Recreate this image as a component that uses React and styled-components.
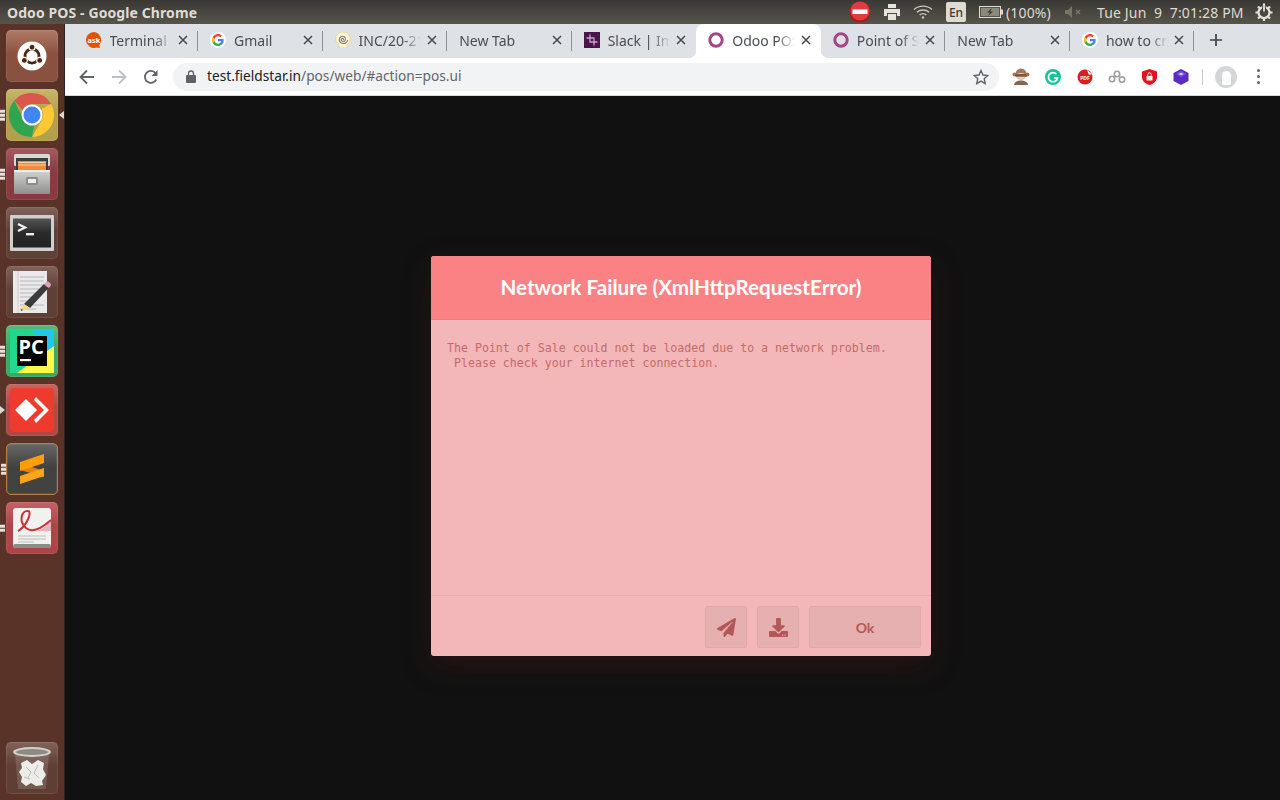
import React from "react";
import styled, { createGlobalStyle } from "styled-components";
import { FaPaperPlane, FaDownload } from "react-icons/fa";

const Global = createGlobalStyle`
  html, body { margin: 0; padding: 0; background: #111; overflow: hidden; }
  * { box-sizing: border-box; }
`;

const Screen = styled.div`
  width: 1280px; height: 800px; display: flex; flex-direction: column; overflow: hidden;
  font-family: "Noto Sans", sans-serif;
`;
const TopBar = styled.header`
  height: 24px; flex: none; display: flex; align-items: center; padding-right: 6px;
  background: linear-gradient(#3a3834, #57544a);
  color: #dfdbd2;
`;
const WindowTitle = styled.div`
  margin-left: 7px; flex: 1; font: 700 14px "Noto Sans", sans-serif; letter-spacing: .1px; white-space: nowrap;
`;
const Indicator = styled.div`
  width: ${p => p.$w}px; margin-left: ${p => p.$ml || 0}px; flex: none; height: 24px;
  display: flex; align-items: center; justify-content: center;
`;
const LangBox = styled.div`
  width: 20px; height: 20px; border-radius: 2px; background: #dfdbd2; color: #3c3b37;
  font: 500 12px "Noto Sans", sans-serif; display: flex; align-items: center; justify-content: center;
`;
const StatusText = styled.span`
  margin-left: ${p => p.$ml || 0}px; width: ${p => p.$w}px; flex: none; white-space: pre;
  font: 400 14px "Noto Sans", sans-serif; letter-spacing: .15px; color: #dfdbd2;
`;

const Body = styled.div`flex: 1; display: flex; min-height: 0;`;
const Launcher = styled.nav`
  width: 65px; flex: none; display: flex; flex-direction: column; align-items: flex-start;
  padding: 6px 0 6px 6px; gap: 7px; background: #5a3328; border-right: 1px solid #2c211d;
`;
const Spacer = styled.div`flex: 1;`;
const Tile = styled.div`
  position: relative; width: 52px; height: 52px; border-radius: 5px; flex: none;
  display: flex; align-items: center; justify-content: center;
  background: linear-gradient(${p => p.$light}, ${p => p.$tone} 45%);
  border: ${p => (p.$ring ? `1px solid ${p.$ring}` : "0")};
  box-shadow: inset 0 0 0 1px rgba(255,255,255,.08);
`;
const Pips = styled.div`
  position: absolute; left: -6px; top: 50%; transform: translateY(-50%);
  display: flex; flex-direction: column; gap: 1.5px;
`;
const Pip = styled.i`display: block; width: 4.5px; height: 2.5px; background: #e4e0da;`;
const Arrow = styled.i`
  position: absolute; top: 50%; transform: translateY(-50%);
  ${p => p.$side === "left"
    ? "left: -6px; border-left: 5px solid #dcd8d2;"
    : "right: -6px; border-right: 5px solid #dcd8d2;"}
  border-top: 4px solid transparent; border-bottom: 4px solid transparent;
`;

const Browser = styled.main`flex: 1; display: flex; flex-direction: column; min-width: 0;`;
const TabStrip = styled.div`
  height: 34px; flex: none; display: flex; align-items: stretch; padding-left: 8.5px; background: #dee1e6;
`;
const Tab = styled.div`
  position: relative; width: 124.55px; flex: none; display: flex; align-items: center;
  padding: 0 8px 2px 12px; color: #4a4d51; font: 400 14px "Noto Sans", sans-serif;
  background: ${p => (p.$active ? "#fff" : "transparent")};
  border-radius: 8px 8px 0 0;
  ${p => p.$sep && `&::after { content: ""; position: absolute; right: 0; top: 7px; bottom: 7px; width: 1px; background: #8d9095; }`}
  ${p => p.$active && `
    &::before { content: ""; position: absolute; left: -8px; right: -8px; bottom: 0; height: 8px; z-index: 0;
      background:
        radial-gradient(circle at 0 0, #dee1e6 8px, #fff 8.5px) left / 8px 8px no-repeat,
        radial-gradient(circle at 100% 0, #dee1e6 8px, #fff 8.5px) right / 8px 8px no-repeat; }
  `}
`;
const Favicon = styled.span`
  position: relative; z-index: 1; width: 16px; height: 16px; margin-right: 8px; flex: none; display: flex;
`;
const TabTitle = styled.span`
  position: relative; z-index: 1; flex: 1; overflow: hidden; white-space: nowrap; min-width: 0;
  mask-image: linear-gradient(to left, transparent 0, #000 ${p => p.$fade}px);
`;
const Close = styled.span`
  position: relative; z-index: 1; width: 14px; height: 14px; margin-left: 4px; flex: none; display: flex; align-items: center; justify-content: center;
`;
const NewTab = styled.div`
  width: 24px; margin-left: 10px; padding-bottom: 2px; display: flex; align-items: center; justify-content: center;
`;
const Toolbar = styled.div`
  height: 38px; flex: none; display: flex; align-items: center; background: #fff; border-bottom: 1px solid #d8d9dc;
`;
const NavButton = styled.div`
  width: 32px; height: 28px; flex: none; display: flex; align-items: center; justify-content: center;
  &:first-child { margin-left: 6px; }
`;
const Omnibox = styled.div`
  margin-left: 6px; width: 826px; height: 28px; flex: none; border-radius: 14px; background: #f1f3f4;
  display: flex; align-items: center; padding: 0 10px 0 13px;
  font: 400 13.7px "Noto Sans", sans-serif; color: #62666b;
`;
const Host = styled.span`color: #202124;`;
const Url = styled.div`margin-left: 11px; padding-bottom: 2px; flex: 1; white-space: nowrap;`;
const ExtGroup = styled.div`margin-left: 6px; display: flex; flex: none;`;
const Ext = styled.div`
  width: 32px; flex: none; height: 28px; display: flex; align-items: center; justify-content: center;
`;
const ToolbarSep = styled.div`width: 1px; height: 16px; background: #c5c7ca; margin: 0 12px 0 5px; flex: none;`;
const Avatar = styled.div`
  width: 22px; height: 22px; border-radius: 50%; background: #d5d6d8; display: flex; align-items: center; justify-content: center; flex: none;
`;
const AvatarFace = styled.i`display: block; width: 9px; height: 14px; margin-top: 3px; border-radius: 5px 5px 2px 2px; background: #fff;`;
const Dots = styled.div`margin-left: 20px; display: flex; flex-direction: column; gap: 3px; flex: none;`;
const Dot = styled.i`display: block; width: 3px; height: 3px; border-radius: 50%; background: #5f6368;`;

const Page = styled.div`flex: 1; position: relative; background: #111;`;
const Modal = styled.section`
  position: absolute; left: 366px; top: 160px; width: 500px; height: 400px;
  display: flex; flex-direction: column; background: #f3b7b9; border-radius: 3px;
  box-shadow: 0 10px 30px rgba(90,30,30,.3);
`;
const ModalTitle = styled.h1`
  margin: 0; height: 64px; flex: none; display: flex; align-items: center; justify-content: center; padding-bottom: 2px;
  background: #fb8284; border-bottom: 1px solid #ee7e80; border-radius: 3px 3px 0 0;
  color: #fff; font: 700 20.6px Lato, sans-serif; letter-spacing: 0;
`;
const ModalBody = styled.div`
  flex: 1; padding: 21px 16px 0; white-space: pre-wrap;
  font: 400 11.6px/15px "DejaVu Sans Mono", monospace; color: #c46b6a;
`;
const ModalFooter = styled.footer`
  height: 61px; flex: none; display: flex; justify-content: flex-end; align-items: flex-start; gap: 10px;
  padding: 10px 10px 0; border-top: 1px solid #eaacae;
`;
const FootButton = styled.div`
  width: ${p => p.$w}px; height: 42px; flex: none; display: flex; align-items: center; justify-content: center;
  background: #e6b0b1; border: 1px solid #e2a9aa; border-radius: 2px; color: #b35759;
  font: 700 14px Lato, sans-serif;
`;

const G = () => (
  <svg width="16" height="16" viewBox="0 0 48 48">
    <circle cx="24" cy="24" r="24" fill="#fff" />
    <path fill="#4285F4" d="M41 24.5c0-1.3-.1-2.5-.3-3.5H24v6.8h9.6c-.4 2.2-1.7 4.1-3.5 5.3v4.4h5.7c3.3-3.1 5.2-7.6 5.2-13z" />
    <path fill="#34A853" d="M24 42c4.8 0 8.8-1.6 11.8-4.4l-5.7-4.4c-1.6 1.1-3.6 1.7-6.1 1.7-4.7 0-8.6-3.1-10-7.4H8.1v4.6C11 37.9 17 42 24 42z" />
    <path fill="#FBBC05" d="M14 27.5c-.4-1.1-.6-2.3-.6-3.5s.2-2.4.6-3.5v-4.6H8.1C6.8 18.300 6 21.100 6 24s.8 5.700 2.100 8.100z" />
    <path fill="#EA4335" d="M24 13.100c2.600 0 5 .9 6.800 2.700l5.100-5.100C32.800 7.800 28.800 6 24 6 17 6 11 10.100 8.100 15.900l5.900 4.600c1.400-4.300 5.300-7.400 10-7.400z" />
  </svg>
);
const AskIcon = () => (
  <svg width="16" height="16" viewBox="0 0 16 16">
    <path d="M8 0a8 8 0 1 0 2.500 15.600L14 16l-.7-3A8 8 0 0 0 8 0z" fill="#e65100" />
    <text x="8" y="10.500" textAnchor="middle" fontSize="7.500" fontWeight="700" fontFamily="Noto Sans" fill="#fff">ask</text>
  </svg>
);
const SpiralIcon = () => (
  <svg width="16" height="16" viewBox="0 0 16 16" fill="none">
    <path d="M4 16v-3.500C1.800 11 .6 9 .6 7A7 7 0 0 1 8 0c4.500 0 7.400 3 7.400 7 0 3-1.500 5-3.400 6v3z" fill="#fbf3d6" stroke="#e8cf8c" strokeWidth=".8" />
    <path d="M8 8c1-.8.200-2-1-1.500-1.500.6-1 3 1 3s3-2 2.200-3.800C9.400 3.800 6 3.800 4.700 6c-1.200 2.300.3 5 3 5.500 2.500.3 4.800-1 5-3.500" stroke="#7f7a68" strokeWidth="1.100" />
  </svg>
);
const SlackIcon = () => (
  <svg width="16" height="16" viewBox="0 0 16 16">
    <rect width="16" height="16" fill="#4a154b" />
    <g stroke="#c7a8c8" strokeWidth="1.300" strokeLinecap="round">
      <path d="M6 3v7M10 6v7M3 6h7M6 10h7" />
    </g>
  </svg>
);
const OdooIcon = () => (
  <svg width="16" height="16" viewBox="0 0 16 16"><circle cx="8" cy="8" r="6.200" fill="none" stroke="#a24689" strokeWidth="3" /></svg>
);
const XIcon = () => (
  <svg width="10" height="10" viewBox="0 0 10 10"><path d="M1 1l8 8M9 1l-8 8" stroke="#45484c" strokeWidth="1.500" /></svg>
);

const tabs = [
  { t: "Terminal", ic: <AskIcon /> },
  { t: "Gmail", ic: <G />, nofade: true },
  { t: "INC/20-21/0001", ic: <SpiralIcon /> },
  { t: "New Tab", nofade: true },
  { t: "Slack | Impactful", ic: <SlackIcon /> },
  { t: "Odoo POS", ic: <OdooIcon />, active: true },
  { t: "Point of Sale", ic: <OdooIcon /> },
  { t: "New Tab", nofade: true },
  { t: "how to create", ic: <G /> },
];

const Ubuntu = () => (
  <svg width="30" height="30" viewBox="0 0 32 32">
    <circle cx="16" cy="16" r="15.500" fill="#fff" />
    <circle cx="16" cy="16" r="7.500" fill="none" stroke="#4f2413" strokeWidth="3" />
    <g fill="#4f2413" stroke="#fff" strokeWidth="1.200"><circle cx="16" cy="6.600" r="3.200" /><circle cx="7.800" cy="20.700" r="3.200" /><circle cx="24.200" cy="20.700" r="3.200" /></g>
  </svg>
);
const Chrome = () => (
  <svg width="46" height="46" viewBox="0 0 46 46">
    <path d="M23 1a22 22 0 0 1 19.050 11H23a11 11 0 0 0-9.800 6L5.400 8.400A22 22 0 0 1 23 1z" fill="#d9574b" />
    <path d="M42.050 12A22 22 0 0 1 23 45l9.500-16.500A11 11 0 0 0 32.500 17z" fill="#fcc934" />
    <path d="M23 45A22 22 0 0 1 5.400 8.400l9.500 20.100A11 11 0 0 0 25 34z" fill="#2fa550" />
    <circle cx="23" cy="23" r="10.500" fill="#fff" />
    <circle cx="23" cy="23" r="8.500" fill="#4285f4" />
  </svg>
);
const Files = () => (
  <svg width="42" height="42" viewBox="0 0 42 42">
    <defs><linearGradient id="fileBody" x1="0" y1="0" x2="0" y2="1"><stop offset="0" stopColor="#d4d4d2" /><stop offset="1" stopColor="#8f8f8d" /></linearGradient></defs>
    <rect x="3" y="1" width="36" height="12" rx="1.500" fill="#d8d8d6" />
    <rect x="5" y="5" width="32" height="14" fill="#3c3c3c" />
    <rect x="7" y="8" width="28" height="9" fill="#f08a3c" />
    <path d="M7 9.500h28M7 12h28" stroke="#fbd3a0" strokeWidth="1" />
    <rect x="3" y="17" width="36" height="24" rx="1.500" fill="url(#fileBody)" />
    <rect x="3" y="17" width="36" height="2" fill="#eeeeec" />
    <rect x="15" y="24" width="12" height="8" rx="1.500" fill="#8c8c8a" />
    <rect x="17" y="26" width="8" height="4" fill="#eeeeec" />
  </svg>
);
const Terminal = () => (
  <svg width="44" height="36" viewBox="0 0 44 36">
    <defs><linearGradient id="termBg" x1="0" y1="0" x2="0" y2="1"><stop offset="0" stopColor="#555" /><stop offset=".5" stopColor="#2a2a2a" /><stop offset="1" stopColor="#222" /></linearGradient></defs>
    <rect width="44" height="36" rx="1" fill="#cfcfcd" />
    <rect x="3" y="3.500" width="38" height="29" fill="url(#termBg)" />
    <path d="M8 9l7 3.500L8 16" fill="none" stroke="#eee" strokeWidth="2.400" />
    <rect x="16" y="18" width="8" height="2.400" fill="#eee" />
  </svg>
);
const Notes = () => (
  <svg width="42" height="44" viewBox="0 0 42 44">
    <rect x="2" y="1" width="34" height="42" fill="#e9e9ec" />
    <path d="M7 1v42" stroke="#e8b9b9" strokeWidth=".8" />
    <g stroke="#a8a8aa" strokeWidth=".8">
      <path d="M9 7h24M9 11h24M9 15h24M9 19h22M9 23h18M9 27h14M9 31h12M9 35h24M9 39h16" />
    </g>
    <path d="M33 14l4.500 4L19 38l-6-4z" fill="#3a3a3a" />
    <path d="M13 34l6 4-9 3z" fill="#f1dc7c" />
    <path d="M10 41l2-1-1.500-1z" fill="#222" />
    <path d="M33 14l2-2c1-1 2-1 3 0l1.500 1.500c.8 1 .6 2-.2 3l-1.800 1.500z" fill="#e39ac1" />
  </svg>
);
const PyCharm = () => (
  <svg width="46" height="46" viewBox="0 0 46 46">
    <path d="M1 1h44v44H1z" fill="#22d88f" />
    <path d="M22 1h23v28z" fill="#21c7e8" />
    <path d="M45 18v27H8z" fill="#fcf84a" />
    <path d="M1 1h20L1 30z" fill="#21d789" />
    <rect x="8" y="8" width="30" height="30" fill="#000" />
    <text x="9.500" y="26" fontFamily="Noto Sans" fontWeight="700" fontSize="20" fill="#fff">PC</text>
    <rect x="11" y="31" width="11" height="2.200" fill="#fff" />
  </svg>
);
const AnyDesk = () => (
  <svg width="44" height="44" viewBox="0 0 44 44">
    <rect width="44" height="44" rx="4" fill="#ef3b2d" />
    <path d="M16 11l11 11-11 11L5 22z" fill="#fff" />
    <path d="M26 9l13 13-13 13-2-3 10-10-10-10z" fill="#fff" />
  </svg>
);
const Sublime = () => (
  <svg width="26" height="32" viewBox="0 0 26 32">
    <path d="M1 10L25 18V24L1 17Z" fill="#e08405" />
    <path d="M1 9L25 1V10L1 18Z" fill="#ff9d0a" />
    <path d="M1 31L25 23V15L1 23Z" fill="#ffa51c" />
  </svg>
);
const Evince = () => (
  <svg width="40" height="42" viewBox="0 0 40 42">
    <rect x="1" y="1" width="38" height="40" rx="3" fill="#f1f1ef" />
    <rect x="1" y="37" width="38" height="4" rx="2" fill="#8d8d8b" />
    <path d="M39 13c-4 6-10 10-16 11h16z" fill="#e39aa0" opacity=".7" />
    <path d="M6 24C16 18 20 4 16 4 10 3 6 14 14 21c6 5 16 0 25-8" fill="none" stroke="#cc3037" strokeWidth="2" />
    <g stroke="#bbb" strokeWidth="1"><path d="M6 29h28M6 32h28M6 35h16" /></g>
  </svg>
);
const Trash = () => (
  <svg width="40" height="46" viewBox="0 0 40 46">
    <path d="M3 8l3 36h28l3-36z" fill="rgba(255,255,255,.14)" />
    <ellipse cx="20" cy="7" rx="19" ry="5" fill="#cfcfcb" />
    <ellipse cx="20" cy="7" rx="16" ry="3" fill="#8d8a84" />
    <g fill="#ecece9">
      <path d="M9 18l6-3 5 4 6-4 6 3-1 6 3 6-4 6 1 4-7 1-5-3-5 3-5-4 1-5-3-5 3-4z" />
    </g>
    <g fill="none" stroke="#bdbdb9" strokeWidth="1"><path d="M14 22l5 5-3 6M26 20l-4 8 5 5M12 32l6 2" /></g>
  </svg>
);

const apps = [
  { k: "u", light: "#b07c68", tone: "#8b5140", ic: <Ubuntu /> },
  { k: "c", light: "#c7b56a", tone: "#b3a04f", ic: <Chrome />, pips: 3, right: true },
  { k: "f", light: "#a65a60", tone: "#8a3b42", ic: <Files />, pips: 3 },
  { k: "t", light: "#80635a", tone: "#5f4036", ic: <Terminal /> },
  { k: "n", light: "#80635a", tone: "#5f4036", ic: <Notes /> },
  { k: "p", light: "#5cb97e", tone: "#3ea864", ic: <PyCharm />, pips: 3 },
  { k: "a", light: "#c76560", tone: "#ad4a46", ic: <AnyDesk />, left: true },
  { k: "s", light: "#666", tone: "#424240", ring: "#b47f47", ic: <Sublime />, pips: 3 },
  { k: "e", light: "#c46268", tone: "#ad4448", ic: <Evince />, pips: 2 },
];

const LaunchItem = ({ a }) => (
  <Tile $light={a.light} $tone={a.tone} $ring={a.ring}>
    {a.ic}
    {a.pips && <Pips>{Array.from({ length: a.pips }, (_, i) => <Pip key={i} />)}</Pips>}
    {a.left && <Arrow $side="left" />}
    {a.right && <Arrow $side="right" />}
  </Tile>
);

export default function App() {
  return (
    <Screen>
      <Global />
      <TopBar>
        <WindowTitle>Odoo POS - Google Chrome</WindowTitle>
        <Indicator $w={22}>
          <svg width="22" height="22" viewBox="0 0 22 22"><circle cx="11" cy="11" r="10.500" fill="#b8141c" /><circle cx="11" cy="10" r="9.500" fill="#dd3d3f" /><rect x="3.500" y="8.500" width="15" height="4.500" fill="#fff" /></svg>
        </Indicator>
        <Indicator $w={20} $ml={11}>
          <svg width="18" height="16" viewBox="0 0 18 16"><path d="M5 0h8v4H5z" fill="#e6e3dc" /><path d="M1 5h16v7h-3v-3H4v3H1z" fill="#e6e3dc" /><path d="M5 10h8v6H5z" fill="#e6e3dc" /></svg>
        </Indicator>
        <Indicator $w={20} $ml={11}>
          <svg width="20" height="16" viewBox="0 0 20 16" fill="none" stroke="#c9c6bd" strokeWidth="1.400"><path d="M1 5.500c5-4.500 13-4.500 18 0" /><path d="M3.800 8.300c3.500-3 9-3 12.400 0" /><path d="M6.600 11c2-1.600 4.800-1.600 6.800 0" /><circle cx="10" cy="13.500" r="1.200" fill="#c9c6bd" stroke="none" /></svg>
        </Indicator>
        <Indicator $w={20} $ml={13}><LangBox>En</LangBox></Indicator>
        <Indicator $w={24} $ml={13}>
          <svg width="24" height="12" viewBox="0 0 24 12"><rect x=".5" y=".5" width="21" height="11" fill="#55524a" stroke="#dfdbd2" /><rect x="2" y="2" width="18" height="8" fill="#8b887e" /><rect x="22" y="3.500" width="2" height="5" fill="#dfdbd2" /><path d="M13 2L8 6.500h3L9 10l5-4.500h-3z" fill="#35332e" /></svg>
        </Indicator>
        <StatusText $ml={3} $w={46}>(100%)</StatusText>
        <Indicator $w={18} $ml={13}>
          <svg width="18" height="12" viewBox="0 0 18 12"><path d="M0 4h3l4-4v12l-4-4H0z" fill="#77746a" /><path d="M11 4l4 4M15 4l-4 4" stroke="#77746a" strokeWidth="1.500" /></svg>
        </Indicator>
        <StatusText $ml={14} $w={146}>Tue Jun  9  7:01:28 PM</StatusText>
        <Indicator $w={20} $ml={11}>
          <svg width="18" height="18" viewBox="0 0 18 18" fill="none" stroke="#e6e3dc">
            <circle cx="9" cy="9.500" r="5.500" strokeWidth="2.200" />
            <path d="M9 .5v3M9 15v3M.5 9.500h3M14.500 9.500h3M3 3.500l2 2M13 13.500l2 2M15 3.500l-2 2M5 13.500l-2 2" strokeWidth="2.200" />
            <path d="M9 3v6" stroke="#46443d" strokeWidth="3.600" />
            <path d="M9 1.500v7" strokeWidth="1.800" />
          </svg>
        </Indicator>
      </TopBar>
      <Body>
        <Launcher>
          {apps.map(a => <LaunchItem key={a.k} a={a} />)}
          <Spacer />
          <Tile $light="#80635a" $tone="#5f3f33"><Trash /></Tile>
        </Launcher>
        <Browser>
          <TabStrip>
            {tabs.map((tab, i) => (
              <Tab key={i} $active={tab.active} $sep={!tab.active && i !== 4}>
                {tab.ic && <Favicon>{tab.ic}</Favicon>}
                <TabTitle $fade={tab.nofade ? 0 : 18}>{tab.t}</TabTitle>
                <Close><XIcon /></Close>
              </Tab>
            ))}
            <NewTab>
              <svg width="14" height="14" viewBox="0 0 14 14"><path d="M7 1v12M1 7h12" stroke="#3c4043" strokeWidth="1.700" /></svg>
            </NewTab>
          </TabStrip>
          <Toolbar>
            <NavButton>
              <svg width="16" height="16" viewBox="0 0 16 16" fill="none"><path d="M15 8H2M8 1.500L1.500 8 8 14.500" stroke="#5f6368" strokeWidth="1.800" /></svg>
            </NavButton>
            <NavButton>
              <svg width="16" height="16" viewBox="0 0 16 16" fill="none"><path d="M1 8h13M8 1.500L14.500 8 8 14.500" stroke="#bdc1c6" strokeWidth="1.800" /></svg>
            </NavButton>
            <NavButton>
              <svg width="16" height="16" viewBox="0 0 16 16" fill="none"><path d="M13.300 10.500A6 6 0 1 1 12.500 4" stroke="#5f6368" strokeWidth="1.800" /><path d="M14.500 1v6h-6z" fill="#5f6368" /></svg>
            </NavButton>
            <Omnibox>
              <svg width="10" height="13" viewBox="0 0 10 13"><path d="M2.500 5V3.500a2.500 2.500 0 0 1 5 0V5" fill="none" stroke="#5f6368" strokeWidth="1.300" /><rect y="5" width="10" height="8" rx="1" fill="#5f6368" /></svg>
              <Url><Host>test.fieldstar.in</Host>/pos/web/#action=pos.ui</Url>
              <svg width="16" height="16" viewBox="0 0 16 16"><path d="M8 1.500l2 4.500 4.800.5-3.600 3.200 1 4.800L8 12.100l-4.200 2.400 1-4.800L1.200 6.500 6 6z" fill="none" stroke="#5f6368" strokeWidth="1.400" /></svg>
            </Omnibox>
            <ExtGroup>
              <Ext>
                <svg width="18" height="17" viewBox="0 0 18 17"><circle cx="9" cy="6" r="5.500" fill="#a1785a" /><circle cx="2.500" cy="6.500" r="2" fill="#a1785a" /><circle cx="15.500" cy="6.500" r="2" fill="#a1785a" /><ellipse cx="9" cy="8" rx="4.500" ry="3" fill="#ecd4b8" /><path d="M2 17c0-6 14-6 14 0z" fill="#8a6449" /><rect x="3" y="6" width="12" height="2.800" rx="1.200" fill="#7d5a42" /></svg>
              </Ext>
              <Ext>
                <svg width="16" height="16" viewBox="0 0 16 16"><circle cx="8" cy="8" r="8" fill="#15c39a" /><path d="M11.500 5.200A4.600 4.600 0 1 0 12.500 9H9" fill="none" stroke="#fff" strokeWidth="1.700" /></svg>
              </Ext>
              <Ext>
                <svg width="16" height="16" viewBox="0 0 16 16"><circle cx="8" cy="8" r="7.500" fill="#e01b1b" /><path d="M10 1l5 4-3 1z" fill="#fff" /><text x="8" y="10.500" textAnchor="middle" fontSize="5" fontWeight="700" fontFamily="Noto Sans" fill="#fff">PDF</text></svg>
              </Ext>
              <Ext>
                <svg width="18" height="14" viewBox="0 0 18 14" fill="none" stroke="#9c9c9c" strokeWidth="1.600"><circle cx="9" cy="4" r="2.700" /><circle cx="4" cy="9" r="2.700" /><circle cx="14" cy="9.500" r="2.700" /></svg>
              </Ext>
              <Ext>
                <svg width="15" height="16" viewBox="0 0 15 16"><path d="M7.500 0L15 2.500V8c0 4-3.500 7-7.500 8C3.500 15 0 12 0 8V2.500z" fill="#e5111b" /><rect x="4.500" y="7" width="6" height="4.500" fill="#fff" /><path d="M5.800 7V5.500a1.700 1.700 0 0 1 3.400 0V7" fill="none" stroke="#fff" strokeWidth="1" /></svg>
              </Ext>
              <Ext>
                <svg width="16" height="16" viewBox="0 0 16 16"><path d="M8 0l7.500 4v8L8 16 .5 12V4z" fill="#5a2bc0" /><path d="M8 2l5 2.800L8 8 3 4.800z" fill="#7d55dc" /><rect x="6.500" y="4" width="3" height="2" fill="#d9ccff" /></svg>
              </Ext>
            </ExtGroup>
            <ToolbarSep />
            <Avatar><AvatarFace /></Avatar>
            <Dots><Dot /><Dot /><Dot /></Dots>
          </Toolbar>
          <Page>
            <Modal>
              <ModalTitle>Network Failure (XmlHttpRequestError)</ModalTitle>
              <ModalBody>{"The Point of Sale could not be loaded due to a network problem.\n Please check your internet connection."}</ModalBody>
              <ModalFooter>
                <FootButton $w={42}><FaPaperPlane size={19} /></FootButton>
                <FootButton $w={42}><FaDownload size={19} /></FootButton>
                <FootButton $w={112}>Ok</FootButton>
              </ModalFooter>
            </Modal>
          </Page>
        </Browser>
      </Body>
    </Screen>
  );
}
